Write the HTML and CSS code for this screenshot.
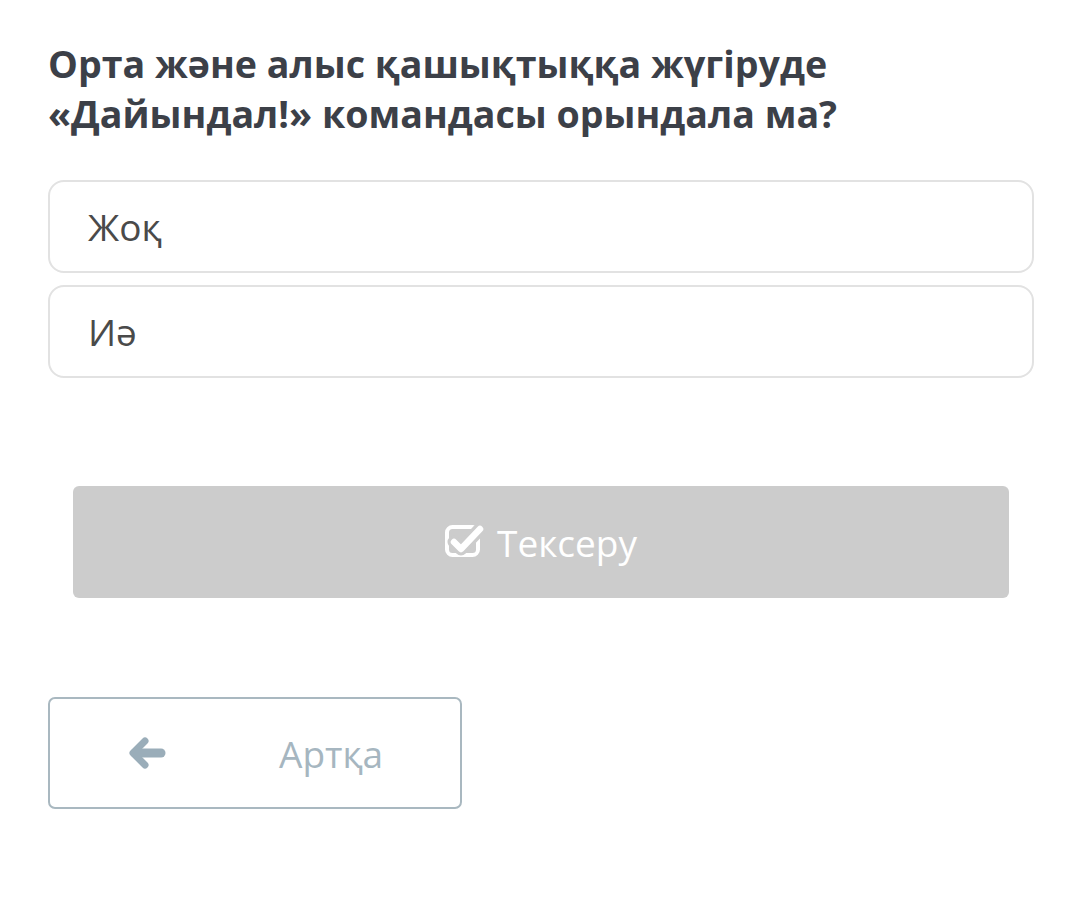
FILE: index.html
```html
<!DOCTYPE html>
<html lang="kk">
<head>
    <meta charset="UTF-8">
    <meta name="viewport" content="width=device-width, initial-scale=1.0">
    <title>Тест</title>
    <link rel="stylesheet" href="styles.css">
</head>
<body>
    <div class="quiz">
        <h1 class="question">Орта жəне алыс қашықтыққа жүгіруде<br>«Дайындал!» командасы орындала ма?</h1>

        <div class="answers">
            <div class="answer">Жоқ</div>
            <div class="answer">Иə</div>
        </div>

        <div class="check-wrap">
            <button class="check-btn" disabled>
                <svg class="check-icon" viewBox="0 0 44 36" width="44" height="36">
                    <rect x="2" y="4" width="31" height="28" rx="5.5" fill="none" stroke="#fff" stroke-width="4"/>
                    <path d="M9 19 L16 26 L35 6" fill="none" stroke="#ccc" stroke-width="13" stroke-linecap="round" stroke-linejoin="round"/>
                    <path d="M9 19 L16 26 L35 6" fill="none" stroke="#fff" stroke-width="6.5" stroke-linecap="round" stroke-linejoin="round"/>
                </svg>
                <span>Тексеру</span>
            </button>
        </div>

        <button class="back-btn">
            <svg class="back-icon" viewBox="0 0 38 32" width="38" height="32">
                <path d="M17 4 L5 16 L17 28" fill="none" stroke="#9aadb9" stroke-width="7" stroke-linecap="round" stroke-linejoin="round"/>
                <path d="M7 16 L33 16" fill="none" stroke="#9aadb9" stroke-width="9" stroke-linecap="round"/>
            </svg>
            <span>Артқа</span>
        </button>
    </div>
</body>
</html>
```

FILE: styles.css
```css
body, html {
    margin: 0;
    padding: 0;
    background: #fff;
    font-family: "Open Sans", "Noto Sans", sans-serif;
}

.quiz {
    width: 986px;
    padding: 39px 0 0 48px;
}

.question {
    margin: 0;
    font-size: 37.6px;
    line-height: 50px;
    font-weight: 700;
    color: #3c4048;
}

.answers {
    margin-top: 41px;
    display: flex;
    flex-direction: column;
    gap: 12px;
}

.answer {
    height: 89px;
    border: 2px solid #e2e2e2;
    border-radius: 16px;
    padding-left: 38px;
    display: flex;
    align-items: center;
    font-size: 37px;
    color: #4a4a4a;
}

.check-wrap {
    padding: 108px 25px 0;
}

.check-btn {
    width: 100%;
    height: 112px;
    border: none;
    border-radius: 6px;
    background: #cccccc;
    color: #fff;
    font-family: inherit;
    font-size: 37px;
    display: flex;
    align-items: center;
    justify-content: center;
    gap: 8px;
}

.check-icon {
    margin-top: -3px;
}

.back-btn {
    margin-top: 99px;
    width: 414px;
    height: 112px;
    border: 2px solid #a9b8c0;
    border-radius: 7px;
    background: #fff;
    font-family: inherit;
    font-size: 37px;
    color: #a6b6c0;
    display: flex;
    align-items: center;
    padding: 0 0 0 78px;
    gap: 113px;
}
```
